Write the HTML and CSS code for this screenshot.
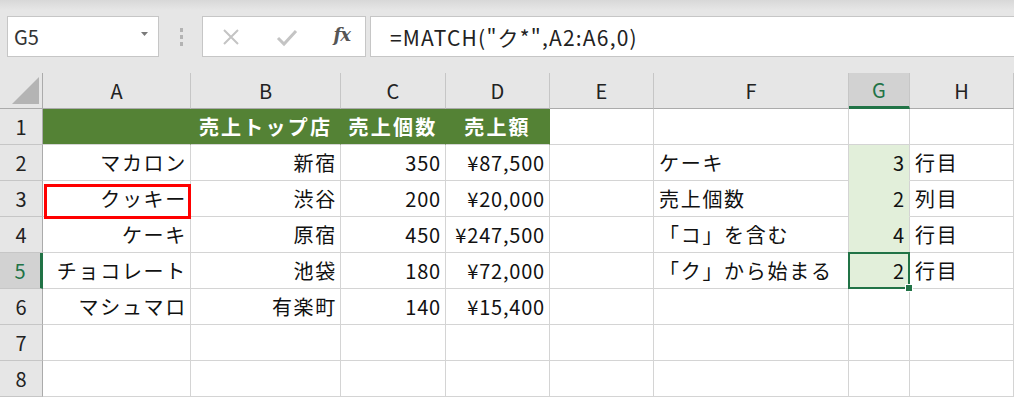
FILE: index.html
```html
<!DOCTYPE html>
<html lang="ja">
<head>
    <meta charset="UTF-8" />
    <meta name="viewport" content="width=device-width, initial-scale=1.0" />
    <title>MATCH</title>
    <link rel="stylesheet" href="styles.css">
</head>
<body>
    <div class="toolbar">
        <div class="namebox">
            <span>G5</span>
            <svg class="caret" width="8" height="5" viewBox="0 0 8 5"><path d="M0 0 H7 L3.5 4 Z" fill="#7a7a7a"/></svg>
        </div>
        <div class="grip"><i></i><i></i><i></i></div>
        <div class="buttons">
            <svg width="20" height="20" viewBox="0 0 20 20"><path d="M3 3 L17 17 M17 3 L3 17" stroke="#c4c4c4" stroke-width="2" fill="none"/></svg>
            <svg width="22" height="20" viewBox="0 0 22 20"><path d="M2 11 L8 17 L20 4" stroke="#c4c4c4" stroke-width="3" fill="none"/></svg>
            <span class="fx">fx</span>
        </div>
        <div class="formula">=MATCH("ク*",A2:A6,0)</div>
    </div>

    <div class="sheet">
        <!-- column headers -->
        <div class="corner"><svg width="42" height="35" viewBox="0 0 42 35"><path d="M12 31 H39 V4 Z" fill="#b4b4b4"/></svg></div>
        <div class="hd">A</div>
        <div class="hd">B</div>
        <div class="hd">C</div>
        <div class="hd">D</div>
        <div class="hd">E</div>
        <div class="hd">F</div>
        <div class="hd sel">G</div>
        <div class="hd">H</div>
        <div class="hd"></div>

        <!-- row 1 -->
        <div class="rh">1</div>
        <div class="c g"></div>
        <div class="c g">売上トップ店</div>
        <div class="c g">売上個数</div>
        <div class="c g">売上額</div>
        <div class="c"></div>
        <div class="c"></div>
        <div class="c"></div>
        <div class="c"></div>
        <div class="c"></div>

        <!-- row 2 -->
        <div class="rh">2</div>
        <div class="c r">マカロン</div>
        <div class="c r">新宿</div>
        <div class="c r n">350</div>
        <div class="c r n">¥87,500</div>
        <div class="c"></div>
        <div class="c">ケーキ</div>
        <div class="c r n fill">3</div>
        <div class="c">行目</div>
        <div class="c"></div>

        <!-- row 3 -->
        <div class="rh">3</div>
        <div class="c r mark">クッキー</div>
        <div class="c r">渋谷</div>
        <div class="c r n">200</div>
        <div class="c r n">¥20,000</div>
        <div class="c"></div>
        <div class="c">売上個数</div>
        <div class="c r n fill">2</div>
        <div class="c">列目</div>
        <div class="c"></div>

        <!-- row 4 -->
        <div class="rh">4</div>
        <div class="c r">ケーキ</div>
        <div class="c r">原宿</div>
        <div class="c r n">450</div>
        <div class="c r n">¥247,500</div>
        <div class="c"></div>
        <div class="c">「コ」を含む</div>
        <div class="c r n fill">4</div>
        <div class="c">行目</div>
        <div class="c"></div>

        <!-- row 5 -->
        <div class="rh sel">5</div>
        <div class="c r">チョコレート</div>
        <div class="c r">池袋</div>
        <div class="c r n">180</div>
        <div class="c r n">¥72,000</div>
        <div class="c"></div>
        <div class="c">「ク」から始まる</div>
        <div class="c r n fill active">2</div>
        <div class="c">行目</div>
        <div class="c"></div>

        <!-- row 6 -->
        <div class="rh">6</div>
        <div class="c r">マシュマロ</div>
        <div class="c r">有楽町</div>
        <div class="c r n">140</div>
        <div class="c r n">¥15,400</div>
        <div class="c"></div>
        <div class="c"></div>
        <div class="c"></div>
        <div class="c"></div>
        <div class="c"></div>

        <!-- row 7 -->
        <div class="rh">7</div>
        <div class="c"></div>
        <div class="c"></div>
        <div class="c"></div>
        <div class="c"></div>
        <div class="c"></div>
        <div class="c"></div>
        <div class="c"></div>
        <div class="c"></div>
        <div class="c"></div>

        <!-- row 8 -->
        <div class="rh">8</div>
        <div class="c"></div>
        <div class="c"></div>
        <div class="c"></div>
        <div class="c"></div>
        <div class="c"></div>
        <div class="c"></div>
        <div class="c"></div>
        <div class="c"></div>
        <div class="c"></div>
    </div>
</body>
</html>
```

FILE: styles.css
```css
body {
    margin: 0;
    overflow: hidden;
    font-family: "Noto Sans CJK JP", "Noto Sans", sans-serif;
    color: #111;
    background: #fff;
}
.toolbar {
    height: 73px;
    box-sizing: border-box;
    padding: 16px 0 0 7px;
    display: flex;
    align-items: flex-start;
    background: linear-gradient(#d8d8d8, #e6e6e6 10px);
}
.namebox {
    width: 152px;
    height: 41px;
    box-sizing: border-box;
    border: 1px solid #c6c6c6;
    background: #fff;
    display: flex;
    align-items: center;
    justify-content: space-between;
    padding: 0 9px 0 6px;
    font-size: 20px;
    color: #333;
}
.caret {
    margin-top: -5px;
}
.grip {
    width: 45px;
    height: 41px;
    display: flex;
    flex-direction: column;
    align-items: center;
    justify-content: center;
    gap: 3px;
    margin-right: -2px;
}
.grip i {
    width: 3px;
    height: 4px;
    background: #b3b3b3;
}
.buttons {
    width: 164px;
    height: 41px;
    box-sizing: border-box;
    border: 1px solid #c6c6c6;
    background: #fff;
    display: flex;
    align-items: center;
    justify-content: space-between;
    padding: 0 15px 0 18px;
    margin-right: 4px;
}
.fx {
    font-family: "DejaVu Serif", "Liberation Serif", serif;
    font-style: italic;
    font-weight: bold;
    font-size: 18px;
    color: #555;
    letter-spacing: -1px;
    margin-top: -4px;
}
.formula {
    flex: 1;
    height: 41px;
    box-sizing: border-box;
    border: 1px solid #c6c6c6;
    border-right: none;
    background: #fff;
    display: flex;
    align-items: center;
    padding-left: 19px;
    font-size: 21px;
    letter-spacing: 1.2px;
    color: #222;
}
.sheet {
    display: grid;
    grid-template-columns: 43px 148px 150px 105px 104px 104px 195px 61px 104px 1fr;
    grid-auto-rows: 36px;
}
.sheet > div {
    box-sizing: border-box;
    display: flex;
    align-items: center;
    overflow: visible;
    white-space: nowrap;
}
.corner {
    background: #e6e6e6;
    border-right: 1px solid #ababab;
    border-bottom: 1px solid #ababab;
}
.hd {
    background: #e6e6e6;
    border-right: 1px solid #c6c6c6;
    border-bottom: 1px solid #ababab;
    justify-content: center;
    font-size: 20px;
    color: #222;
}
.hd.sel {
    background: #d2d2d2;
    color: #217346;
    border-bottom: 3px solid #217346;
}
.rh {
    background: #e6e6e6;
    border-right: 1px solid #ababab;
    border-bottom: 1px solid #c6c6c6;
    justify-content: center;
    font-size: 20px;
    color: #222;
}
.rh.sel {
    background: #d2d2d2;
    color: #217346;
    border-right: 3px solid #217346;
}
.c {
    border-right: 1px solid #d4d4d4;
    border-bottom: 1px solid #d4d4d4;
    padding: 0 5px;
    font-size: 20px;
    letter-spacing: 1.7px;
}
.r {
    justify-content: flex-end;
    padding-right: 3px;
}
.n {
    letter-spacing: 0.8px;
    padding-right: 4px;
}
.g {
    background: #548235;
    border-right-color: #548235;
    color: #fff;
    font-weight: bold;
    letter-spacing: 2.2px;
    justify-content: center;
}
.fill {
    background: #e2efda;
    border-bottom-color: #e2efda;
}
.mark,
.active {
    position: relative;
}
.mark::after {
    content: "";
    position: absolute;
    left: 1px;
    top: 3px;
    right: -1px;
    bottom: -3px;
    border: 3px solid #ff0000;
}
.active::after {
    content: "";
    position: absolute;
    left: -1px;
    top: -1px;
    right: -1px;
    bottom: -1px;
    border: 2px solid #217346;
}
.active::before {
    content: "";
    position: absolute;
    right: -4px;
    bottom: -4px;
    width: 6px;
    height: 6px;
    background: #217346;
    border: 1px solid #fff;
    z-index: 1;
}
```
